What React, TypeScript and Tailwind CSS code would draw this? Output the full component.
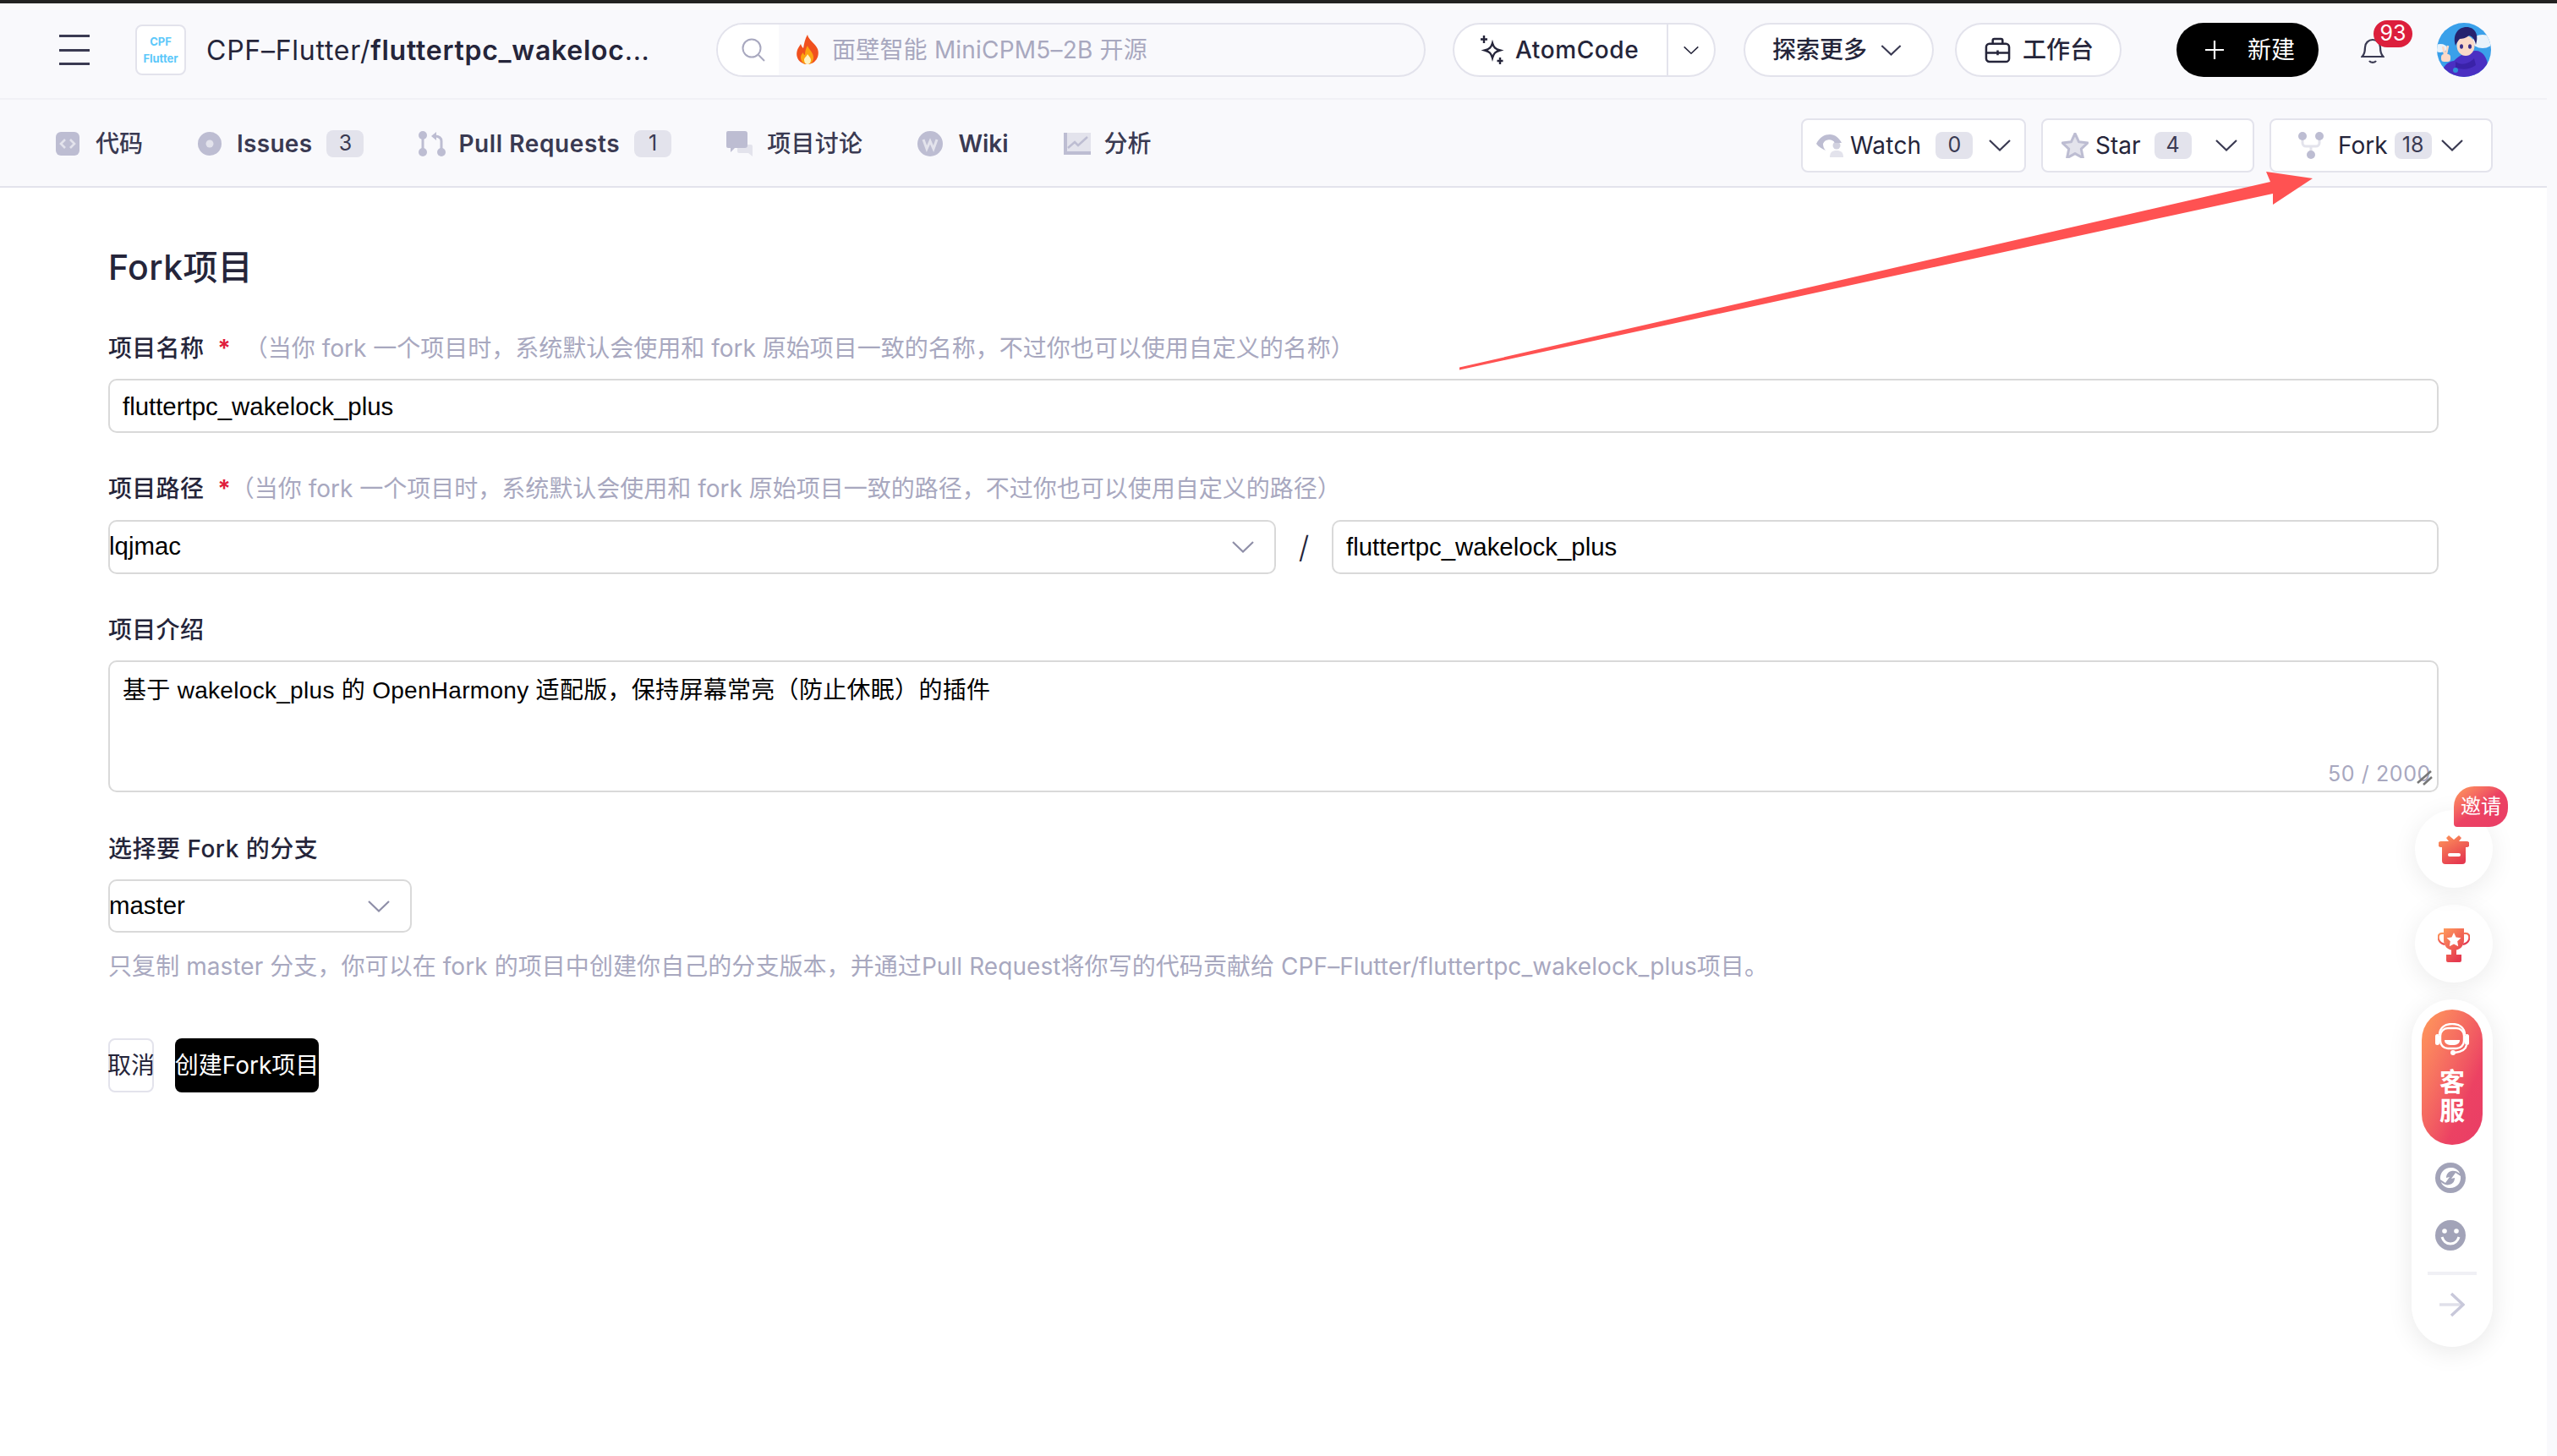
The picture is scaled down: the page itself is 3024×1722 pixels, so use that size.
import React from "react";

const Chevron = ({ className = "w-[26px] h-[14px]", color = "#3a3a52" }: { className?: string; color?: string }) => (
  <svg viewBox="0 0 26 14" className={"flex-none " + className} fill="none" stroke={color} strokeWidth="2.2">
    <polyline points="1,1 13,12.5 25,1" />
  </svg>
);

const Count = ({ n, className = "" }: { n: string; className?: string }) => (
  <span className={"flex-none w-[44px] h-[32px] rounded-[8px] bg-[#e3e3ec] flex items-center justify-center text-[25px] font-normal tracking-normal text-[#3a3a52] " + className}>{n}</span>
);

const IC = "#bdbdd2";
const IL = "#e3e3ec";

const Grad = ({ id }: { id: string }) => (
  <defs>
    <linearGradient id={id} x1="0" y1="0" x2="0.6" y2="1">
      <stop offset="0" stopColor="#ff9a5c" />
      <stop offset="1" stopColor="#e5394f" />
    </linearGradient>
  </defs>
);

const Field = ({ children, className = "" }: { children: React.ReactNode; className?: string }) => (
  <div className={"h-[64px] bg-white border-2 border-[#d9d9d9] rounded-[10px] flex items-center text-[29.4px] text-black " + className} style={{ fontFamily: '"Liberation Sans","Noto Sans CJK SC",sans-serif' }}>
    {children}
  </div>
);

export default function App() {
  return (
    <div className="relative w-[3024px] h-[1722px] overflow-hidden bg-white text-[28px] text-[#25253a]" style={{ fontFamily: 'Inter,"Noto Sans CJK SC",sans-serif' }}>
      <div className="h-[4px] bg-[#222222]" />
      <div className="flex h-[1718px]">
        <div className="w-[3012px] flex-none flex flex-col">
          {/* top navigation */}
          <header className="h-[114px] flex-none bg-[#f9f9fc] border-b-2 border-[#f1f1f6] flex items-center pl-[70px] pb-[2px]">
            <div className="w-[36px] h-[36px] flex-none flex flex-col justify-between">
              <span className="h-[3px] bg-[#3a3a52]" />
              <span className="h-[3px] bg-[#3a3a52]" />
              <span className="h-[3px] bg-[#3a3a52]" />
            </div>
            <div className="ml-[54px] w-[60px] h-[60px] flex-none bg-white border-2 border-[#e3e3ec] rounded-[8px] flex flex-col items-center justify-center text-[#5cc8fa] font-bold text-[13px] leading-[20px]">
              <span>CPF</span>
              <span>Flutter</span>
            </div>
            <div className="ml-[24px] mt-[2px] w-[523px] flex-none text-[32px] tracking-[0.75px] whitespace-nowrap text-[#25253a]">
              CPF–Flutter/<span className="font-semibold">fluttertpc_wakeloc</span>...
            </div>
            <div className="w-[839px] h-[64px] flex-none ml-[80px] rounded-full border-2 border-[#e3e3ec] flex items-center overflow-hidden text-[#a8a8bf]">
              <div className="w-[72px] h-full bg-white flex items-center pl-[27px] flex-none">
                <svg viewBox="0 0 30 30" className="w-[30px] h-[30px]" fill="none" stroke="#a8a8bf" strokeWidth="2">
                  <circle cx="13" cy="13" r="10.5" />
                  <line x1="21" y1="21" x2="28" y2="28" />
                </svg>
              </div>
              <svg viewBox="0 0 30 36" className="w-[30px] h-[36px] ml-[19px] flex-none">
                <path d="M15 0c1 6 9 10 12 17 3 9-3 18-12 18S0 27 3 18c1-3 3-5 4-7 1 3 2 4 3 5 1-6 2-11 5-16z" fill="#f0501e" />
                <path d="M15 13c1 4 7 8 7 14 0 5-3 8-7 8s-8-3-8-8c0-3 2-5 3-6 0 2 1 3 2 3 0-4 1-8 3-11z" fill="#fca311" />
                <path d="M15 23c1 2 4 4 4 7s-2 5-4 5-4-2-4-5 3-4 4-7z" fill="#fff3c4" />
              </svg>
              <span className="ml-[14px] whitespace-nowrap tracking-[0.2px]">面壁智能 MiniCPM5–2B 开源</span>
            </div>
            <div className="ml-[32px] w-[311px] h-[64px] flex-none rounded-full border-2 border-[#e3e3ec] bg-white flex items-center font-medium">
              <div className="w-[253px] h-full flex items-center pl-[30px] border-r-2 border-[#e3e3ec] flex-none">
                <svg viewBox="0 0 30 36" className="w-[30px] h-[36px] flex-none" fill="none" stroke="#25253a" strokeWidth="2.4">
                  <path d="M15 10c1.500 5 3.500 7 9 8.500-5.500 1.500-7.500 3.500-9 9-1.500-5.500-3.500-7.500-9-9 5.500-1.500 7.500-3.500 9-8.500z" />
                  <path d="M5 1v9M1 5.500h8M24 27v8M20.500 31h7" />
                </svg>
                <span className="ml-[12px] whitespace-nowrap tracking-[0.6px]">AtomCode</span>
              </div>
              <div className="flex-1 flex items-center justify-center">
                <Chevron className="w-[18px] h-[11px]" color="#25253a" />
              </div>
            </div>
            <div className="ml-[33px] w-[225px] h-[64px] flex-none rounded-full border-2 border-[#e3e3ec] bg-white flex items-center pl-[32px] font-medium whitespace-nowrap">
              <span>探索更多</span>
              <Chevron className="w-[25px] h-[13px] ml-[16px]" />
            </div>
            <div className="ml-[25px] w-[197px] h-[64px] flex-none rounded-full border-2 border-[#e3e3ec] bg-white flex items-center pl-[33px] font-medium whitespace-nowrap">
              <svg viewBox="0 0 32 32" className="w-[31px] h-[31px] flex-none" fill="none" stroke="#25253a" strokeWidth="2.6">
                <rect x="2" y="8" width="28" height="22" rx="4" />
                <path d="M10 8V4a2 2 0 0 1 2-2h8a2 2 0 0 1 2 2v4M2 19h28M16 16v6" />
              </svg>
              <span className="ml-[14px]">工作台</span>
            </div>
            <div className="ml-[65px] w-[168px] h-[64px] flex-none rounded-full bg-black text-white flex items-center pl-[34px] whitespace-nowrap">
              <svg viewBox="0 0 22 22" className="w-[22px] h-[22px] flex-none" fill="none" stroke="#fff" strokeWidth="2.2">
                <path d="M11 0v22M0 11h22" />
              </svg>
              <span className="ml-[28px]">新建</span>
            </div>
            <div className="relative ml-[50px] w-[28px] h-[32px] flex-none">
              <svg viewBox="0 0 28 32" className="w-[28px] h-[32px]" fill="none" stroke="#3a3a52" strokeWidth="2.2">
                <path d="M1.500 24c3-3 3.500-6 3.500-11a9 9 0 0 1 18 0c0 5 .5 8 3.500 11z" />
                <path d="M10 29c1.500 2.500 6.500 2.500 8 0" />
              </svg>
              <span className="absolute left-[15px] top-[-19px] w-[46px] h-[32px] rounded-full bg-[#dc1f3c] text-white text-[25px] flex items-center justify-center">93</span>
            </div>
            <svg viewBox="0 0 64 64" className="ml-[62px] w-[64px] h-[64px] flex-none">
              <defs>
                <clipPath id="av"><circle cx="32" cy="32" r="32" /></clipPath>
              </defs>
              <g clipPath="url(#av)">
                <rect width="64" height="64" fill="#3aa0ea" />
                <ellipse cx="54" cy="22" rx="12" ry="8" fill="#e8f2fb" />
                <ellipse cx="4" cy="30" rx="8" ry="5" fill="#e8f2fb" />
                <path d="M4 64c2-12 8-18 16-19 6-6 16-12 26-12 8 0 13 8 14 16l2 15z" fill="#4a2fc2" />
                <path d="M22 46c6 4 14 4 22-4l2 8c-6 5-16 6-24 3z" fill="#3a22a8" />
                <circle cx="22" cy="56" r="3" fill="#2f8fd8" />
                <ellipse cx="34" cy="27" rx="10.500" ry="12" fill="#fbd9c8" />
                <path d="M22 27C18 14 25 5 35 5c10 0 15 9 11 21-1-6-4-10-8-11-4 3-8 4-11 4-2 2-4 5-5 8z" fill="#26226e" />
                <ellipse cx="29" cy="28" rx="2" ry="2.800" fill="#3c2f8a" />
                <ellipse cx="39" cy="28" rx="2" ry="2.800" fill="#3c2f8a" />
                <path d="M7 28l2.500 11M13 27l-2.500 12" stroke="#fbd9c8" strokeWidth="2.600" />
                <rect x="5" y="37" width="11" height="9" rx="3.500" fill="#fbd9c8" />
              </g>
            </svg>
          </header>

          {/* repository tabs */}
          <nav className="h-[104px] flex-none bg-[#f9f9fc] border-b-2 border-[#e3e3ec] flex items-center pl-[66px] pr-[64px] font-medium text-[#3a3a52] whitespace-nowrap">
            <div className="flex items-center gap-[65px] mt-[1px]">
              <div className="flex items-center gap-[19px]">
                <svg viewBox="0 0 28 28" className="w-[28px] h-[28px] flex-none">
                  <rect width="28" height="28" rx="6" fill={IC} />
                  <path d="M11 9l-5 5 5 5M17 9l5 5-5 5" fill="none" stroke={IL} strokeWidth="2.600" />
                </svg>
                <span>代码</span>
              </div>
              <div className="flex items-center">
                <svg viewBox="0 0 28 28" className="w-[28px] h-[28px] flex-none">
                  <circle cx="14" cy="14" r="14" fill={IC} />
                  <circle cx="14" cy="14" r="4.500" fill={IL} />
                </svg>
                <span className="ml-[18px] font-semibold tracking-[0.3px]">Issues</span>
                <Count n="3" className="ml-[17px]" />
              </div>
              <div className="flex items-center">
                <svg viewBox="0 0 32 30" className="w-[32px] h-[30px] flex-none" fill={IC}>
                  <circle cx="5" cy="5" r="5" />
                  <circle cx="5" cy="25" r="5" />
                  <circle cx="27" cy="25" r="5" />
                  <rect x="3.500" y="8" width="3" height="14" />
                  <path d="M15 6l6-5v10z" />
                  <path d="M19 6c5 0 8 2 8 6v9" fill="none" stroke={IC} strokeWidth="3" />
                </svg>
                <span className="ml-[15px] font-semibold tracking-[0.6px]">Pull Requests</span>
                <Count n="1" className="ml-[17px]" />
              </div>
              <div className="flex items-center gap-[16px]">
                <svg viewBox="0 0 32 30" className="w-[32px] h-[30px] flex-none">
                  <path d="M11 16h16a2 2 0 0 1 2 2v12l-5-4H13a2 2 0 0 1-2-2z" fill={IL} transform="translate(2 0)" />
                  <path d="M2 0h20a3 3 0 0 1 3 3v14a3 3 0 0 1-3 3H10l-5 5v-5H2a2 2 0 0 1-2-2V2a2 2 0 0 1 2-2z" fill={IC} />
                </svg>
                <span className="tracking-[0.3px]">项目讨论</span>
              </div>
              <div className="flex items-center gap-[18px]">
                <svg viewBox="0 0 30 30" className="w-[30px] h-[30px] flex-none">
                  <circle cx="15" cy="15" r="15" fill={IC} />
                  <path d="M7 10l4 11 4-9 4 9 4-11" fill="none" stroke={IL} strokeWidth="3" />
                </svg>
                <span className="font-semibold">Wiki</span>
              </div>
              <div className="flex items-center gap-[16px]">
                <svg viewBox="0 0 32 26" className="w-[32px] h-[26px] flex-none">
                  <rect x="4" y="0" width="28" height="22" fill={IL} />
                  <path d="M0 0h4v22h28v4H0z" fill={IC} />
                  <path d="M5 18l8-7 4 4 11-10" fill="none" stroke={IC} strokeWidth="2.500" />
                </svg>
                <span>分析</span>
              </div>
            </div>
            <div className="ml-auto mt-[5px] flex items-center gap-[18px] font-normal text-[#25253a]">
              <div className="w-[266px] h-[64px] bg-white border-2 border-[#e3e3ec] rounded-[8px] flex items-center pl-[16px]">
                <svg viewBox="0 0 32 28" className="w-[32px] h-[28px] flex-none">
                  <path d="M0 12C4 4 10 1 16 1s11 4 14 10h-8a8 8 0 0 0-14 1c0 3 1 6 3 8C7 18 3 16 0 12z" fill={IC} />
                  <circle cx="24" cy="14" r="4.500" fill={IC} opacity=".7" />
                  <path d="M16 28c0-6 3-8 8-8s8 2 8 8z" fill={IL} />
                </svg>
                <span className="ml-[8px] tracking-[0.2px]">Watch</span>
                <Count n="0" className="ml-[17px]" />
                <Chevron className="w-[26px] h-[14px] ml-[19px]" />
              </div>
              <div className="w-[252px] h-[64px] bg-white border-2 border-[#e3e3ec] rounded-[8px] flex items-center pl-[22px]">
                <svg viewBox="0 0 32 30" className="w-[32px] h-[30px] flex-none">
                  <path d="M16 1l4.600 9.800 10.400 1.200-7.700 7.200 2.100 10.600L16 24.600 6.600 29.800l2.100-10.600L1 12l10.400-1.200z" fill={IL} stroke={IC} strokeWidth="3" strokeLinejoin="round" />
                </svg>
                <span className="ml-[8px]">Star</span>
                <Count n="4" className="ml-[16px]" />
                <Chevron className="w-[26px] h-[14px] ml-[28px]" />
              </div>
              <div className="w-[264px] h-[64px] bg-white border-2 border-[#e3e3ec] rounded-[8px] flex items-center pl-[32px]">
                <svg viewBox="0 0 30 32" className="w-[30px] h-[32px] flex-none">
                  <path d="M5 8v5a4 4 0 0 0 4 4h12a4 4 0 0 0 4-4V8M15 17v8" fill="none" stroke={IL} strokeWidth="3" />
                  <circle cx="5" cy="5" r="5" fill={IC} />
                  <circle cx="25" cy="5" r="5" fill={IC} />
                  <circle cx="15" cy="27" r="5" fill={IC} />
                </svg>
                <span className="ml-[17px]">Fork</span>
                <Count n="18" className="ml-[8px]" />
                <Chevron className="w-[26px] h-[14px] ml-[11px]" />
              </div>
            </div>
          </nav>

          {/* form */}
          <main className="pl-[128px] w-[2884px] flex flex-col">
            <h1 className="mt-[66px] text-[41px] leading-[56px] font-medium tracking-[0.4px]">Fork项目</h1>

            <div className="mt-[48px] h-[40px] flex items-center whitespace-nowrap">
              <span className="font-medium tracking-[0.3px]">项目名称</span>
              <span className="ml-[16px] text-[#e01e3c] font-bold">*</span>
              <span className="ml-[16px] text-[#a8a8bf]">（当你 fork 一个项目时，系统默认会使用和 fork 原始项目一致的名称，不过你也可以使用自定义的名称）</span>
            </div>
            <Field className="mt-[16px] pl-[15px] pt-[2px]">fluttertpc_wakelock_plus</Field>

            <div className="mt-[46px] h-[40px] flex items-center whitespace-nowrap">
              <span className="font-medium tracking-[0.3px]">项目路径</span>
              <span className="ml-[16px] text-[#e01e3c] font-bold">*</span>
              <span className="text-[#a8a8bf]">（当你 fork 一个项目时，系统默认会使用和 fork 原始项目一致的路径，不过你也可以使用自定义的路径）</span>
            </div>
            <div className="mt-[17px] flex items-center">
              <Field className="w-[1381px] flex-none justify-between pr-[24px]">
                <span className="-ml-[1px] -mt-[2px]">lqjmac</span>
                <Chevron className="w-[26px] h-[14px]" color="#8f8fa8" />
              </Field>
              <span className="w-[66px] flex-none text-center text-[36px] font-light text-[#25253a]">/</span>
              <Field className="flex-1 pl-[15px]">fluttertpc_wakelock_plus</Field>
            </div>

            <div className="mt-[46px] h-[40px] flex items-center font-medium tracking-[0.3px]">项目介绍</div>
            <div className="relative mt-[16px] h-[156px] bg-white border-2 border-[#d9d9d9] rounded-[10px] pl-[15px] pt-[14px] text-[28px] leading-[40px] tracking-[0.3px] text-black" style={{ fontFamily: '"Liberation Sans","Noto Sans CJK SC",sans-serif' }}>
              基于 wakelock_plus 的 OpenHarmony 适配版，保持屏幕常亮（防止休眠）的插件
              <span className="absolute right-[7px] bottom-[4px] text-[25px] leading-[32px] tracking-[0.6px] text-[#a8a8bf]" style={{ fontFamily: "Inter,sans-serif" }}>50 / 2000</span>
              <svg viewBox="0 0 19 18" className="absolute right-[5px] bottom-[6px] w-[19px] h-[18px]" stroke="#777777" strokeWidth="2.600">
                <path d="M1 15L17 1M8 17L18 8" />
              </svg>
            </div>

            <div className="mt-[47px] h-[40px] flex items-center font-medium tracking-[0.5px]">选择要 Fork 的分支</div>
            <Field className="mt-[16px] !h-[63px] w-[359px] justify-between pr-[24px]">
              <span className="-ml-[1px]">master</span>
              <Chevron className="w-[26px] h-[14px]" color="#8f8fa8" />
            </Field>
            <p className="mt-[20px] h-[40px] flex items-center text-[#a8a8bf] whitespace-nowrap tracking-[0.07px]">只复制 master 分支，你可以在 fork 的项目中创建你自己的分支版本，并通过Pull Request将你写的代码贡献给 CPF–Flutter/fluttertpc_wakelock_plus项目。</p>
            <div className="mt-[65px] flex items-center gap-[25px] text-[#25253a]">
              <button className="w-[54px] h-[64px] bg-white border-2 border-[#e3e3ec] rounded-[8px] flex items-center justify-center whitespace-nowrap">取消</button>
              <button className="w-[170px] h-[64px] bg-black text-white rounded-[8px] flex items-center justify-center whitespace-nowrap">创建Fork项目</button>
            </div>
          </main>
        </div>
        <div className="flex-1 bg-[#f9f9fc]" />
      </div>

      {/* annotation arrow */}
      <svg className="absolute left-0 top-0 pointer-events-none" width="3024" height="500" viewBox="0 0 3024 500">
        <path d="M1726 434.500L2685 215L2680 203L2735 211L2688 242L2688 229L1726 437.500Z" fill="#ff5252" />
      </svg>

      {/* floating widgets */}
      <div className="absolute left-[2852px] top-[958px] w-[96px] flex flex-col items-center">
        <div className="relative w-[92px] h-[92px] ml-[4px] rounded-full bg-white shadow-[0_6px_30px_rgba(0,0,0,0.08)] flex items-center justify-center">
          <svg viewBox="0 0 36 34" className="w-[36px] h-[34px] mt-[2px]">
            <Grad id="g1" />
            <path d="M3 7h9l-3-4 3-3 6 5 6-5 3 3-3 4h9a3 3 0 0 1 0 7h-1v16a4 4 0 0 1-4 4H8a4 4 0 0 1-4-4V14H3a3 3 0 0 1 0-7z" fill="url(#g1)" />
            <rect x="11" y="21" width="15" height="4" rx="2" fill="#fff" />
          </svg>
          <span className="absolute left-[46px] top-[-28px] w-[64px] h-[48px] rounded-[24px_22px_22px_4px] bg-linear-to-br from-[#ff9a5a] via-[#ec4263] to-[#e93d66] text-white text-[24px] flex items-center justify-center whitespace-nowrap">邀请</span>
        </div>
        <div className="mt-[20px] ml-[4px] w-[92px] h-[92px] rounded-full bg-white shadow-[0_6px_30px_rgba(0,0,0,0.08)] flex items-center justify-center">
          <svg viewBox="0 0 38 40" className="w-[38px] h-[40px] mt-[4px]">
            <Grad id="g2" />
            <path d="M7 0h24v14c0 7-5 12-12 12S7 21 7 14zM16 25h6v6h6v7a2 2 0 0 1-2 2H12a2 2 0 0 1-2-2v-7h6z" fill="url(#g2)" />
            <path d="M7 6C1 5 0 9 1 13c1 3 4 5 7 6M31 6c6-1 7 3 6 7-1 3-4 5-7 6" fill="none" stroke="url(#g2)" strokeWidth="2.200" />
            <path d="M19 5l2.600 5.400 5.900.8-4.300 4.100 1 5.900L19 18.400l-5.200 2.800 1-5.900-4.300-4.100 5.900-.8z" fill="#fff" />
          </svg>
        </div>
        <div className="mt-[20px] w-[96px] h-[411px] rounded-[48px] bg-white shadow-[0_6px_30px_rgba(0,0,0,0.09)] flex flex-col items-center pt-[12px]">
          <div className="w-[72px] h-[160px] rounded-[36px] bg-linear-to-br from-[#ff9a5a] via-[#ec4263] via-70% to-[#e93d66] flex flex-col items-center text-white text-[30px] leading-[34px] font-bold pt-[16px]">
            <svg viewBox="0 0 40 38" className="w-[40px] h-[38px] mb-[14px] flex-none">
              <path d="M5 14C5 5 12 1 20 1s15 4 15 13" fill="none" stroke="#fff" strokeWidth="2.400" />
              <rect x="6" y="6" width="28" height="24" rx="9" fill="none" stroke="#fff" strokeWidth="2.400" />
              <rect x="0" y="13" width="5" height="13" rx="2.500" fill="#fff" />
              <rect x="35" y="13" width="5" height="13" rx="2.500" fill="#fff" />
              <path d="M11 20h18c0 4-3 6-9 6s-9-2-9-6z" fill="#fff" />
              <path d="M37 26c-1 6-6 8-14 9" fill="none" stroke="#fff" strokeWidth="2.400" />
              <circle cx="21" cy="35" r="3" fill="#fff" />
            </svg>
            <span>客</span>
            <span>服</span>
          </div>
          <svg viewBox="0 0 36 36" className="w-[36px] h-[36px] mt-[21px] -ml-[4px] flex-none">
            <circle cx="18" cy="18" r="18" fill="#a2a3b8" />
            <path d="M6 20c-1-9 6-15 14-14 4 .5 8 3 9 7-3-3-7-4-10-3-4 1-6 4-6 8l4-1-5 7zM30 16c1 9-6 15-14 14-4-.5-8-3-9-7 3 3 7 4 10 3 4-1 6-4 6-8l-4 1 5-7z" fill="#fff" />
          </svg>
          <svg viewBox="0 0 36 36" className="w-[36px] h-[36px] mt-[32px] -ml-[4px] flex-none">
            <circle cx="18" cy="18" r="18" fill="#a2a3b8" />
            <circle cx="11" cy="13" r="2.800" fill="#fff" />
            <circle cx="25" cy="13" r="2.800" fill="#fff" />
            <path d="M8 20c2 6 6 8 10 8s8-2 10-8" fill="none" stroke="#fff" strokeWidth="3" />
          </svg>
          <div className="mt-[25px] w-[58px] h-[4px] bg-[#f0f0f5] flex-none" />
          <svg viewBox="0 0 30 30" className="w-[30px] h-[30px] mt-[20px] flex-none" fill="none" strokeWidth="3.500">
            <path d="M0 15h28" stroke="#e0e0ea" />
            <path d="M14 2l14 13-14 13" stroke="#c8c8da" />
          </svg>
        </div>
      </div>
    </div>
  );
}
